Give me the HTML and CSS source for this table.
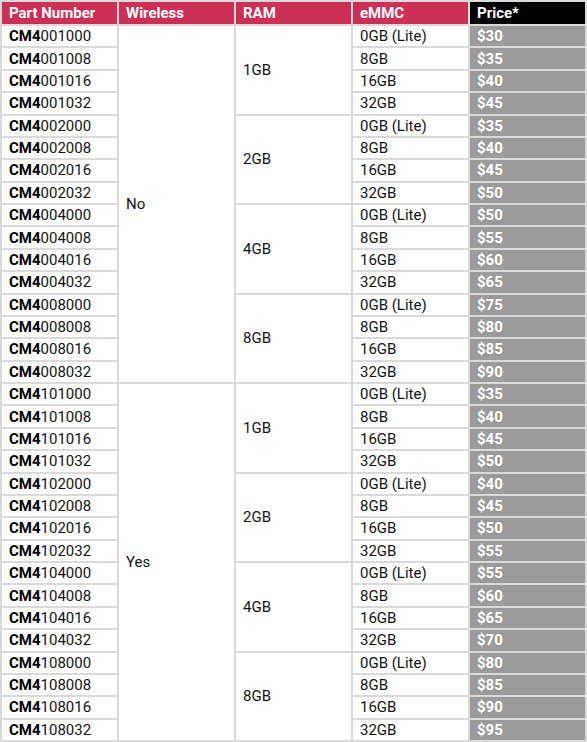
FILE: index.html
```html
<!DOCTYPE html>
<html>
<head>
<meta charset="utf-8">
<link rel="stylesheet" href="styles.css">
</head>
<body>
<table class="spec">
<thead>
<tr><th>Part Number</th><th>Wireless</th><th>RAM</th><th>eMMC</th><th class="price-h">Price*</th></tr>
</thead>
<tbody>
<tr><td class="pn"><b>CM4</b>001000</td><td class="wl" rowspan="16">No</td><td class="ram" rowspan="4">1GB</td><td>0GB (Lite)</td><td class="price">$30</td></tr>
<tr><td class="pn"><b>CM4</b>001008</td><td>8GB</td><td class="price">$35</td></tr>
<tr><td class="pn"><b>CM4</b>001016</td><td>16GB</td><td class="price">$40</td></tr>
<tr><td class="pn"><b>CM4</b>001032</td><td>32GB</td><td class="price">$45</td></tr>
<tr><td class="pn"><b>CM4</b>002000</td><td class="ram" rowspan="4">2GB</td><td>0GB (Lite)</td><td class="price">$35</td></tr>
<tr><td class="pn"><b>CM4</b>002008</td><td>8GB</td><td class="price">$40</td></tr>
<tr><td class="pn"><b>CM4</b>002016</td><td>16GB</td><td class="price">$45</td></tr>
<tr><td class="pn"><b>CM4</b>002032</td><td>32GB</td><td class="price">$50</td></tr>
<tr><td class="pn"><b>CM4</b>004000</td><td class="ram" rowspan="4">4GB</td><td>0GB (Lite)</td><td class="price">$50</td></tr>
<tr><td class="pn"><b>CM4</b>004008</td><td>8GB</td><td class="price">$55</td></tr>
<tr><td class="pn"><b>CM4</b>004016</td><td>16GB</td><td class="price">$60</td></tr>
<tr><td class="pn"><b>CM4</b>004032</td><td>32GB</td><td class="price">$65</td></tr>
<tr><td class="pn"><b>CM4</b>008000</td><td class="ram" rowspan="4">8GB</td><td>0GB (Lite)</td><td class="price">$75</td></tr>
<tr><td class="pn"><b>CM4</b>008008</td><td>8GB</td><td class="price">$80</td></tr>
<tr><td class="pn"><b>CM4</b>008016</td><td>16GB</td><td class="price">$85</td></tr>
<tr><td class="pn"><b>CM4</b>008032</td><td>32GB</td><td class="price">$90</td></tr>
<tr><td class="pn"><b>CM4</b>101000</td><td class="wl" rowspan="16">Yes</td><td class="ram" rowspan="4">1GB</td><td>0GB (Lite)</td><td class="price">$35</td></tr>
<tr><td class="pn"><b>CM4</b>101008</td><td>8GB</td><td class="price">$40</td></tr>
<tr><td class="pn"><b>CM4</b>101016</td><td>16GB</td><td class="price">$45</td></tr>
<tr><td class="pn"><b>CM4</b>101032</td><td>32GB</td><td class="price">$50</td></tr>
<tr><td class="pn"><b>CM4</b>102000</td><td class="ram" rowspan="4">2GB</td><td>0GB (Lite)</td><td class="price">$40</td></tr>
<tr><td class="pn"><b>CM4</b>102008</td><td>8GB</td><td class="price">$45</td></tr>
<tr><td class="pn"><b>CM4</b>102016</td><td>16GB</td><td class="price">$50</td></tr>
<tr><td class="pn"><b>CM4</b>102032</td><td>32GB</td><td class="price">$55</td></tr>
<tr><td class="pn"><b>CM4</b>104000</td><td class="ram" rowspan="4">4GB</td><td>0GB (Lite)</td><td class="price">$55</td></tr>
<tr><td class="pn"><b>CM4</b>104008</td><td>8GB</td><td class="price">$60</td></tr>
<tr><td class="pn"><b>CM4</b>104016</td><td>16GB</td><td class="price">$65</td></tr>
<tr><td class="pn"><b>CM4</b>104032</td><td>32GB</td><td class="price">$70</td></tr>
<tr><td class="pn"><b>CM4</b>108000</td><td class="ram" rowspan="4">8GB</td><td>0GB (Lite)</td><td class="price">$80</td></tr>
<tr><td class="pn"><b>CM4</b>108008</td><td>8GB</td><td class="price">$85</td></tr>
<tr><td class="pn"><b>CM4</b>108016</td><td>16GB</td><td class="price">$90</td></tr>
<tr><td class="pn"><b>CM4</b>108032</td><td>32GB</td><td class="price">$95</td></tr>
</tbody>
</table>
</body>
</html>
```
FILE: styles.css
```css
html, body {
  margin: 0;
  padding: 0;
  background: #ffffff;
}
body {
  font-family: Roboto, "Liberation Sans", sans-serif;
  font-size: 15px;
  color: #141414;
}
.spec {
  border-collapse: separate;
  border-spacing: 2px;
  background: #dadada;
  width: 587px;
  table-layout: fixed;
}
.spec th, .spec td {
  padding: 0 0 0 7px;
  text-align: left;
  vertical-align: middle;
  background: #ffffff;
  white-space: nowrap;
  line-height: 16px;
}
.spec th {
  background: #cc3057;
  color: #ffffff;
  font-weight: bold;
  height: 22px;
}
.spec th.price-h {
  background: #000000;
}
.spec tbody tr {
  height: 20.375px;
}
.spec td.price {
  background: #9b9b9b;
  color: #ffffff;
  font-weight: bold;
}
.spec td.pn b {
  font-weight: bold;
  color: #000;
}
```
